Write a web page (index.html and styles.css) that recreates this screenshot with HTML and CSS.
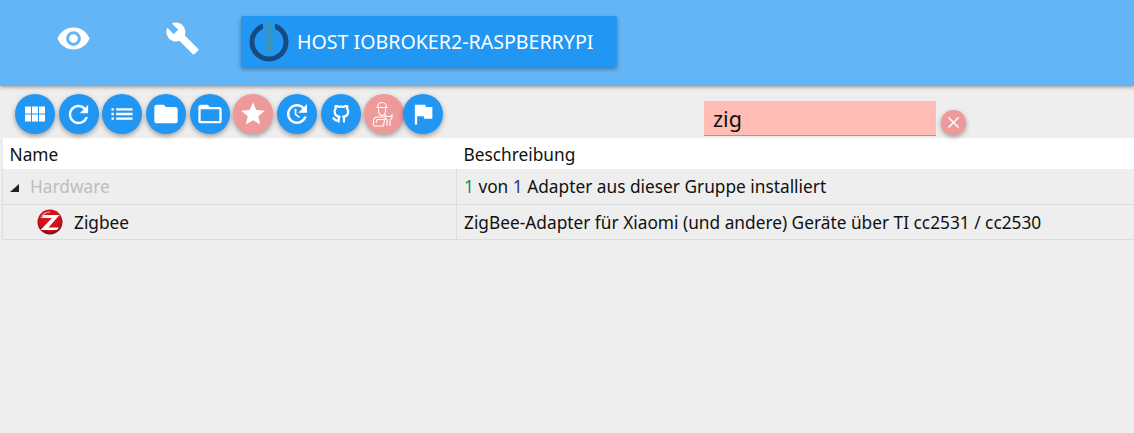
FILE: index.html
```html
<!DOCTYPE html>
<html lang="en">
<head>
    <meta charset="UTF-8">
    <title>Adapter</title>
    <link rel="stylesheet" href="styles.css">
</head>
<body>

    <header class="topbar">
        <a class="tab-icon tab-eye">
            <svg viewBox="0 0 24 24" width="35" height="35"><path fill="#fff" d="M12 4.500C7 4.500 2.730 7.610 1 12c1.730 4.390 6 7.500 11 7.500s9.270-3.110 11-7.500c-1.730-4.390-6-7.500-11-7.500zM12 17c-2.760 0-5-2.240-5-5s2.240-5 5-5 5 2.240 5 5-2.240 5-5 5zm0-8c-1.660 0-3 1.340-3 3s1.340 3 3 3 3-1.340 3-3-1.340-3-3-3z"/></svg>
        </a>
        <a class="tab-icon tab-wrench">
            <svg viewBox="0 0 24 24" width="35" height="35"><path fill="#fff" d="M22.700 19l-9.100-9.100c.9-2.300.4-5-1.500-6.900-2-2-5-2.400-7.400-1.300L9 6 6 9 1.600 4.700C.4 7.100.9 10.100 2.900 12.100c1.900 1.900 4.600 2.400 6.900 1.500l9.100 9.100c.4.4 1 .4 1.400 0l2.300-2.300c.5-.4.5-1.100.1-1.400z"/></svg>
        </a>
        <button class="host-btn">
            <svg class="host-ring" viewBox="0 0 40 40" width="40" height="40">
                <circle cx="20" cy="20" r="17" fill="none" stroke="#174a7f" stroke-width="5"/>
                <rect x="14" y="0" width="12" height="12" fill="#2196f3"/>
                <rect x="16.500" y="0.500" width="7" height="30" fill="#3a96c0"/>
            </svg>
            <span>HOST IOBROKER2-RASPBERRYPI</span>
        </button>
    </header>

    <div class="toolbar">
        <div class="tool-buttons">
            <button class="round">
                <svg viewBox="0 0 24 24" width="24" height="24"><path fill="#fff" d="M2 4.500h6v7H2zM9 4.500h6v7H9zM16 4.500h6v7h-6zM2 12.500h6v7H2zM9 12.500h6v7H9zM16 12.500h6v7h-6z"/></svg>
            </button>
            <button class="round">
                <svg viewBox="0 0 24 24" width="29" height="29"><path fill="#fff" d="M17.650 6.350C16.200 4.900 14.210 4 12 4c-4.420 0-7.990 3.580-7.990 8s3.570 8 7.990 8c3.730 0 6.840-2.550 7.730-6h-2.080c-.82 2.330-3.040 4-5.650 4-3.310 0-6-2.690-6-6s2.690-6 6-6c1.660 0 3.140.69 4.220 1.780L13 11h7V4l-2.350 2.350z"/></svg>
            </button>
            <button class="round">
                <svg viewBox="0 0 24 24" width="28" height="28"><path fill="#fff" d="M3 13h2v-2H3v2zm0 4h2v-2H3v2zm0-8h2V7H3v2zm4 4h14v-2H7v2zm0 4h14v-2H7v2zM7 7v2h14V7H7z"/></svg>
            </button>
            <button class="round">
                <svg viewBox="0 0 24 24" width="28" height="28"><path fill="#fff" d="M10 4H4c-1.100 0-1.990.9-1.990 2L2 18c0 1.100.9 2 2 2h16c1.100 0 2-.9 2-2V8c0-1.100-.9-2-2-2h-8l-2-2z"/></svg>
            </button>
            <button class="round">
                <svg viewBox="0 0 24 24" width="28" height="28"><path fill="#fff" d="M20 6h-8l-2-2H4c-1.100 0-1.990.9-1.990 2L2 18c0 1.100.9 2 2 2h16c1.100 0 2-.9 2-2V8c0-1.100-.9-2-2-2zm0 12H4V8h16v10z"/></svg>
            </button>
            <button class="round round-off">
                <svg viewBox="0 0 24 24" width="28" height="28"><path fill="#fff" d="M12 17.270L18.180 21l-1.640-7.030L22 9.240l-7.190-.61L12 2 9.190 8.630 2 9.240l5.460 4.730L5.820 21z"/></svg>
            </button>
            <button class="round">
                <svg viewBox="0 0 24 24" width="30" height="30"><path fill="#fff" d="M17.650 6.350C16.200 4.900 14.210 4 12 4c-4.420 0-7.990 3.580-7.990 8s3.570 8 7.990 8c3.730 0 6.840-2.550 7.730-6h-2.080c-.82 2.330-3.040 4-5.650 4-3.310 0-6-2.690-6-6s2.690-6 6-6c1.660 0 3.140.69 4.220 1.780L13 11h7V4l-2.350 2.350z"/><path fill="none" stroke="#fff" stroke-width="1.400" d="M10.800 8v4.300l3.200 2.400"/></svg>
            </button>
            <button class="round">
                <svg viewBox="0 0 24 24" width="18" height="18"><path fill="none" stroke="#fff" stroke-width="3" stroke-linecap="round" stroke-linejoin="round" d="M8.500 20.500c-4.500 1.300-5-2-6.500-2.800m14 4.300v-3.870a3.370 3.370 0 0 0-.94-2.610c3.140-.35 6.440-1.540 6.440-7A5.440 5.440 0 0 0 20 4.770 5.070 5.070 0 0 0 19.910 1S18.730.65 16 2.480a13.380 13.380 0 0 0-7 0C6.270.65 5.090 1 5.090 1A5.070 5.070 0 0 0 5 4.770a5.440 5.440 0 0 0-1.500 3.780c0 5.420 3.300 6.610 6.440 7A3.370 3.370 0 0 0 9 18.130V22"/></svg>
            </button>
            <button class="round round-off">
                <svg viewBox="0 0 26 28" width="26" height="28" fill="none" stroke="#fff" stroke-width="1.100">
                    <path d="M6.500 7.500c0-3 2-5 4.500-5s4.500 2 4.500 5zM5.500 7.500h11"/>
                    <path d="M7.500 8.500v2c0 3 1.700 5 3.500 5s3.500-2 3.500-5v-2"/>
                    <path d="M2.500 26v-5c0-2.500 2-4 4.500-4h6M2.500 26h10l1-6.500H6l-1 3.500"/>
                    <path d="M16 26v-6l-2-2v-3l1.500 1.500h4L21 15v3l-2 2v6"/>
                </svg>
            </button>
            <button class="round round-flag">
                <svg viewBox="0 0 24 24" width="28" height="28"><path fill="#fff" d="M14.400 6L14 4H5v17h2v-7h5.600l.4 2h7V6z"/></svg>
            </button>
        </div>
        <div class="filter">
            <input class="filter-input" type="text" value="zig">
            <button class="clear-btn">
                <svg viewBox="0 0 24 24" width="19" height="19"><path fill="#fff" d="M19 6.410L17.590 5 12 10.590 6.410 5 5 6.410 10.590 12 5 17.590 6.410 19 12 13.410 17.590 19 19 17.590 13.410 12z"/></svg>
            </button>
        </div>
    </div>

    <table class="adapters">
        <thead>
            <tr>
                <th class="col-name">Name</th>
                <th>Beschreibung</th>
            </tr>
        </thead>
        <tbody>
            <tr class="group">
                <td class="group-name"><span class="arrow"></span>Hardware</td>
                <td><span class="count">1</span> von <span class="total">1</span> Adapter aus dieser Gruppe installiert</td>
            </tr>
            <tr class="adapter">
                <td>
                    <div class="adapter-name">
                        <svg class="zigbee" viewBox="0 0 26 26" width="26" height="26">
                            <defs>
                                <radialGradient id="zb" cx="50%" cy="40%" r="62%">
                                    <stop offset="0" stop-color="#e8151d"/>
                                    <stop offset="0.700" stop-color="#c8121a"/>
                                    <stop offset="1" stop-color="#6f0a0e"/>
                                </radialGradient>
                            </defs>
                            <circle cx="13" cy="13" r="12.500" fill="url(#zb)"/>
                            <path fill="none" stroke="#fff" stroke-opacity="0.500" stroke-width="1.500" d="M4 9c1.500-3.500 5-6 9-6"/>
                            <path fill="#fff" d="M6.500 6h16L11.500 18.500h10.500l-2 2.500H3.500l11.500-12H5z"/>
                        </svg>
                        <span>Zigbee</span>
                    </div>
                </td>
                <td>ZigBee-Adapter für Xiaomi (und andere) Geräte über TI cc2531 / cc2530</td>
            </tr>
        </tbody>
    </table>

</body>
</html>
```

FILE: styles.css
```css
html, body {
    height: 100%;
}
body {
    margin: 0;
    overflow: hidden;
    background-color: #eeeeee;
    color: #111;
    font-family: "Noto Sans", "Open Sans", sans-serif;
    font-size: 17.300px;
}
button {
    border: none;
    padding: 0;
    cursor: pointer;
    font-family: inherit;
}

/* top bar */
.topbar {
    display: flex;
    align-items: flex-start;
    height: 86px;
    background: #64b5f6;
    box-shadow: 0 1px 4px rgba(0, 0, 0, 0.4);
}
.tab-icon {
    display: flex;
}
.tab-eye {
    margin: 21px 0 0 56px;
}
.tab-wrench {
    margin: 21px 0 0 74px;
}
.host-btn {
    display: flex;
    align-items: center;
    width: 376px;
    height: 51px;
    margin: 16px 0 0 41px;
    padding-left: 8px;
    background: #2196f3;
    color: #fff;
    font-size: 19.600px;
    border-radius: 2px;
    box-shadow: 0 2px 4px rgba(0, 0, 0, 0.35);
}
.host-ring {
    margin-right: 8px;
}

/* toolbar */
.toolbar {
    display: flex;
    height: 52px;
}
.tool-buttons {
    display: flex;
    gap: 3.670px;
    width: 704px;
    padding: 8px 0 0 15px;
    box-sizing: border-box;
}
.round {
    display: flex;
    align-items: center;
    justify-content: center;
    flex: none;
    width: 40px;
    height: 40px;
    border-radius: 50%;
    background: #2196f3;
    box-shadow: 0 2px 5px rgba(0, 0, 0, 0.35);
}
.round-off {
    background: #ef9a9a;
}
.round-flag {
    margin-left: -4.500px;
}
.filter {
    display: flex;
    padding-top: 15px;
}
.filter-input {
    width: 232px;
    height: 35px;
    box-sizing: border-box;
    padding: 0 9px;
    border: none;
    border-bottom: 1px solid #9e9e9e;
    outline: none;
    background: #ffbdb6;
    color: #111;
    font-family: inherit;
    font-size: 21.500px;
}
.clear-btn {
    display: flex;
    align-items: center;
    justify-content: center;
    width: 25px;
    height: 25px;
    margin: 9px 0 0 5px;
    border-radius: 50%;
    background: #ef9a9a;
    box-shadow: 0 2px 5px rgba(0, 0, 0, 0.35);
}

/* table */
.adapters {
    width: 1132px;
    margin-left: 2px;
    border-collapse: collapse;
    table-layout: fixed;
}
.adapters th {
    height: 31px;
    padding: 2px 7px 0;
    box-sizing: border-box;
    background: #fff;
    font-weight: normal;
    text-align: left;
}
.col-name {
    width: 454px;
}
.adapters td {
    padding: 0 7px;
    border: 1px solid #dcdcdc;
    border-top: none;
    border-right: none;
}
.group td {
    height: 35px;
}
.adapter td {
    height: 34px;
}
.group-name {
    color: #bdbdbd;
}
.arrow {
    display: inline-block;
    width: 0;
    height: 0;
    margin: 0 11px 1px 0;
    border-style: solid;
    border-width: 0 0 8px 9px;
    border-color: transparent transparent #222 transparent;
}
.count {
    color: #0d8f5f;
}
.total {
    color: #1a3d80;
}
.adapter-name {
    display: flex;
    align-items: center;
    padding-left: 27px;
    gap: 11px;
}
```
